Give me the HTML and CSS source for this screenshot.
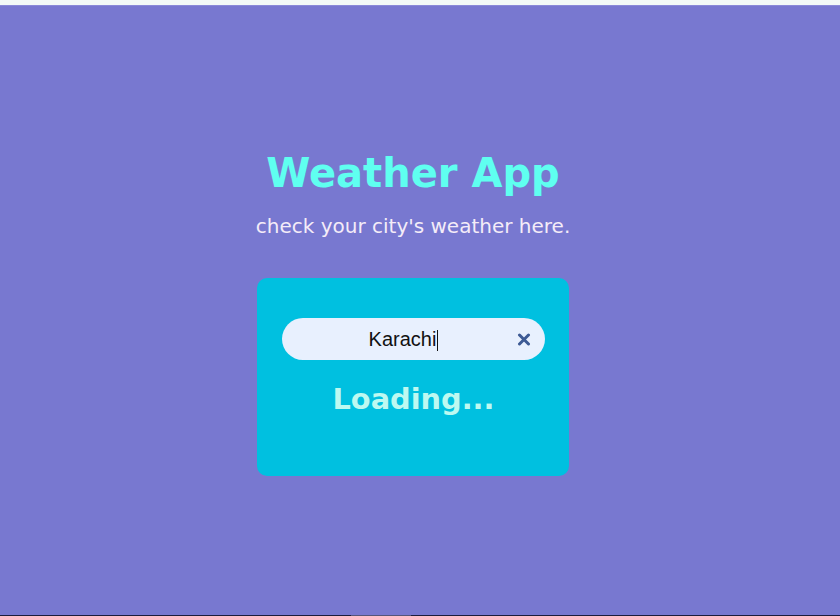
FILE: index.html
```html
<!DOCTYPE html>
<html lang="en">
<head>
<meta charset="utf-8">
<title>Weather App</title>
<link rel="stylesheet" href="styles.css">
</head>
<body>
<div class="topstrip"></div>
<main class="page">
  <h1 class="title">Weather App</h1>
  <p class="subtitle">check your city's weather here.</p>
  <section class="card">
    <div class="search">
      <span class="query">Karachi<span class="caret"></span></span>
      <svg class="clear" width="14" height="13" viewBox="0 0 14 13" aria-hidden="true">
        <path d="M2.5 2 L11.5 11 M11.5 2 L2.5 11" stroke="#3d5a94" stroke-width="3" stroke-linecap="round"/>
      </svg>
    </div>
    <div class="loading">Loading...</div>
  </section>
</main>
<div class="bottombar"><div class="thumb"></div></div>
</body>
</html>
```
FILE: styles.css
```css
html, body {
  margin: 0;
  padding: 0;
}
body {
  width: 840px;
  height: 616px;
  overflow: hidden;
  background: #f3faf7;
  display: flex;
  flex-direction: column;
  font-family: "DejaVu Sans", Verdana, sans-serif;
}
.topstrip {
  height: 5px;
  flex: none;
  background: #f3faf7;
}
.page {
  flex: 1;
  background: #7878d0;
  border-top: 1px solid #8a8ad8;
  display: flex;
  flex-direction: column;
  align-items: center;
  padding: 144px 14px 0 0;
}
.title {
  margin: 0;
  font-size: 40px;
  font-weight: bold;
  color: #5ffff0;
  line-height: 46px;
}
.subtitle {
  margin: 18px 0 0;
  font-size: 20px;
  color: #f4ecf8;
  line-height: 24px;
}
.card {
  margin-top: 40px;
  width: 312px;
  height: 198px;
  box-sizing: border-box;
  background: #00c0e0;
  border-radius: 10px;
  padding: 40px 24px 0 25px;
  display: flex;
  flex-direction: column;
  align-items: center;
}
.search {
  width: 263px;
  height: 42px;
  box-sizing: border-box;
  padding-right: 20px;
  border-radius: 21px;
  background: #e8f0fe;
  display: flex;
  align-items: center;
  justify-content: center;
  position: relative;
}
.query {
  font-family: "Liberation Sans", Arial, sans-serif;
  font-size: 20px;
  color: #111;
  display: inline-flex;
  align-items: center;
}
.caret {
  display: inline-block;
  width: 1px;
  height: 21px;
  background: #111;
  margin-left: 1px;
  position: relative;
  top: 1px;
}
.clear {
  position: absolute;
  right: 14px;
  top: 15px;
}
.loading {
  margin-top: 21px;
  font-size: 28.8px;
  font-weight: bold;
  color: #bdf9f1;
  line-height: 36px;
}
.bottombar {
  height: 1px;
  flex: none;
  background: #1c1c3c;
  position: relative;
}
.thumb {
  position: absolute;
  left: 351px;
  width: 60px;
  top: 0;
  height: 1px;
  background: #55557a;
}
```
